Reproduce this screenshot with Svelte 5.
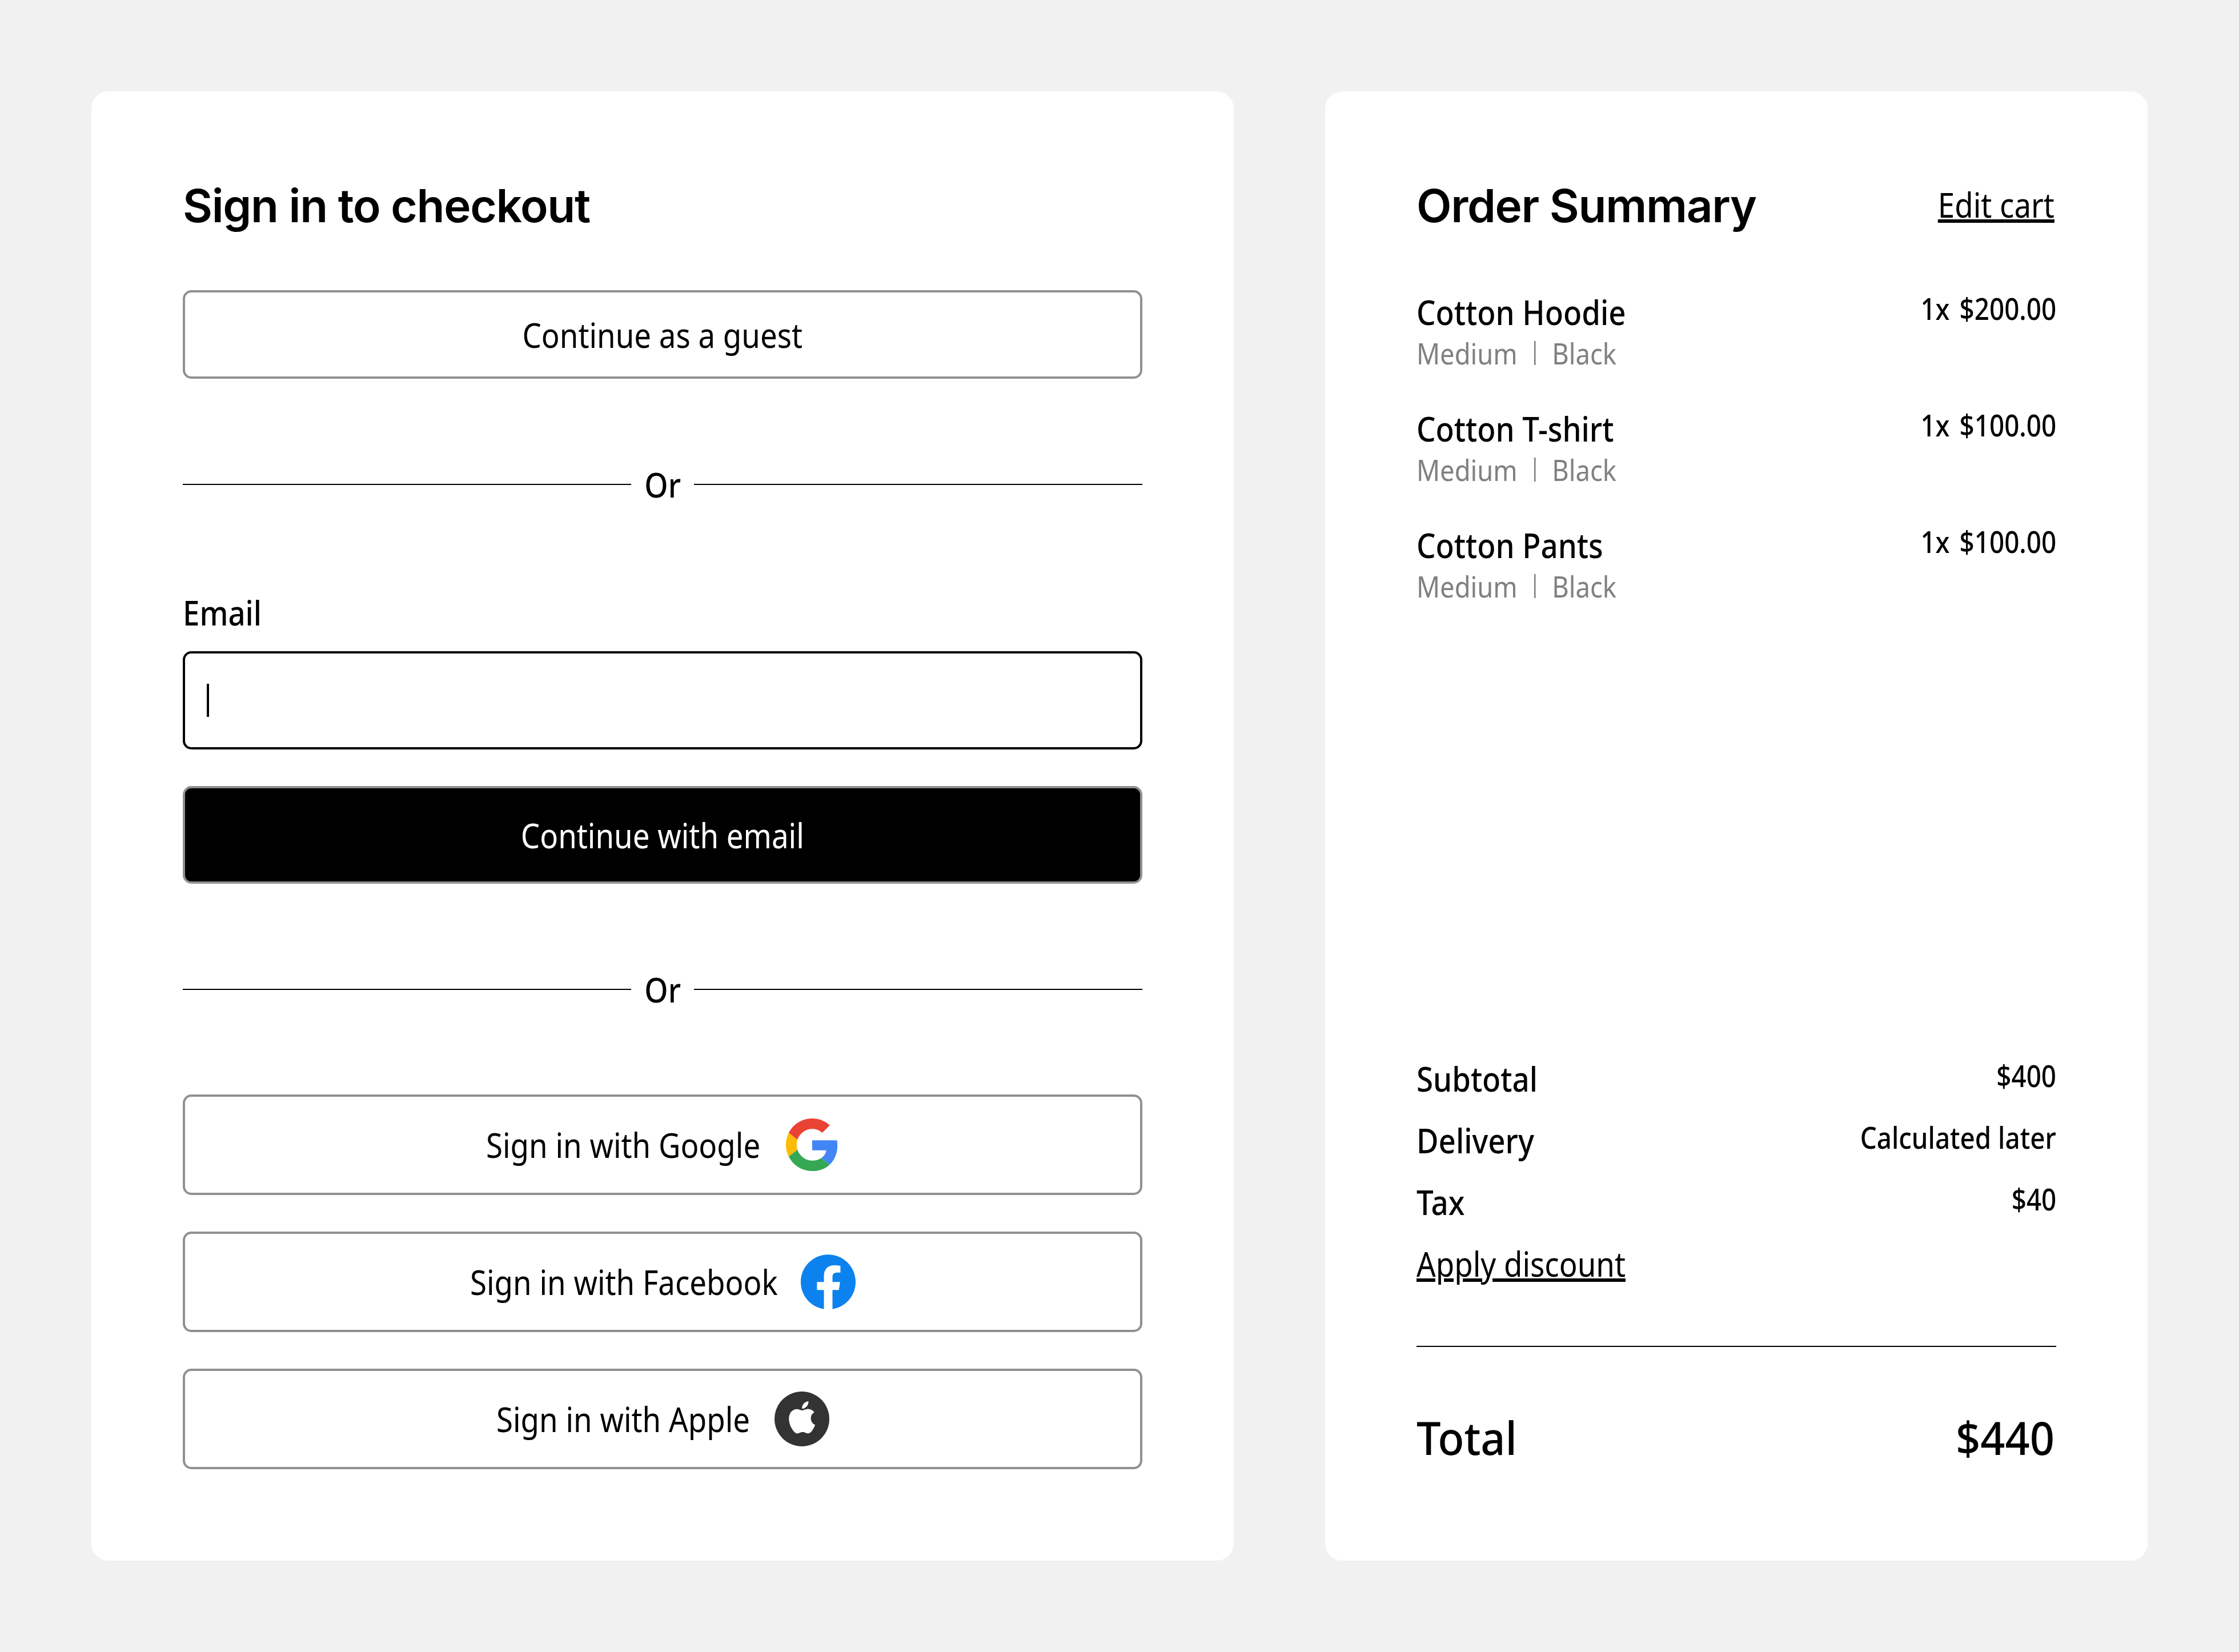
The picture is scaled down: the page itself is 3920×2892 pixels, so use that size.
<script lang="ts">
	const items = [
		{ name: 'Cotton Hoodie', price: '$200.00' },
		{ name: 'Cotton T-shirt', price: '$100.00' },
		{ name: 'Cotton Pants', price: '$100.00' }
	];

	const charges = [
		{ label: 'Subtotal', value: '$400' },
		{ label: 'Delivery', value: 'Calculated later' },
		{ label: 'Tax', value: '$40' }
	];
</script>

<main class="page">
	<section class="card signin">
		<h1>Sign in to checkout</h1>

		<button class="btn guest"><span class="narrow">Continue as a guest</span></button>

		<div class="divider"><span class="narrow">Or</span></div>

		<label class="email-label" for="email"><span class="narrow left">Email</span></label>
		<div class="input" id="email"><span class="caret"></span></div>
		<button class="btn primary"><span class="narrow">Continue with email</span></button>

		<div class="divider"><span class="narrow">Or</span></div>

		<div class="socials">
			<button class="btn social">
				<span class="narrow left label" style="width: 479px">Sign in with Google</span>
				<svg class="icon" viewBox="-1 -1 50 50">
					<path fill="#EA4335" d="M24 9.5c3.54 0 6.71 1.22 9.21 3.6l6.85-6.85C35.9 2.38 30.47 0 24 0 14.62 0 6.51 5.38 2.56 13.22l7.98 6.19C12.43 13.72 17.74 9.5 24 9.5z" />
					<path fill="#4285F4" d="M46.98 24.55c0-1.57-.15-3.09-.38-4.55H24v9.02h12.94c-.58 2.96-2.26 5.48-4.78 7.18l7.73 6c4.51-4.18 7.09-10.36 7.09-17.65z" />
					<path fill="#FBBC05" d="M10.53 28.59c-.48-1.45-.76-2.99-.76-4.59s.27-3.14.76-4.59l-7.98-6.19C.92 16.46 0 20.12 0 24c0 3.88.92 7.54 2.56 10.78l7.97-6.19z" />
					<path fill="#34A853" d="M24 48c6.48 0 11.93-2.13 15.89-5.81l-7.73-6c-2.15 1.45-4.92 2.3-8.16 2.3-6.26 0-11.57-4.22-13.47-9.91l-7.98 6.19C6.51 42.62 14.62 48 24 48z" />
				</svg>
			</button>
			<button class="btn social">
				<span class="narrow left label" style="width: 535px">Sign in with Facebook</span>
				<svg class="icon" viewBox="0 0 24 24">
					<path fill="#0c82ee" d="M24 12.073c0-6.627-5.373-12-12-12s-12 5.373-12 12c0 5.99 4.388 10.954 10.125 11.854v-8.385H7.078v-3.47h3.047V9.43c0-3.007 1.792-4.669 4.533-4.669 1.312 0 2.686.235 2.686.235v2.953H15.83c-1.491 0-1.956.925-1.956 1.874v2.25h3.328l-.532 3.47h-2.796v8.385C19.612 23.027 24 18.062 24 12.073z" />
				</svg>
			</button>
			<button class="btn social">
				<span class="narrow left label" style="width: 443px">Sign in with Apple</span>
				<svg class="icon" viewBox="0 0 96 96">
					<circle cx="48" cy="48" r="48" fill="#333" />
					<g transform="translate(20 17) scale(2.35)">
						<path fill="#fff" d="M12.152 6.896c-.948 0-2.415-1.078-3.96-1.04-2.04.027-3.91 1.183-4.961 3.014-2.117 3.675-.546 9.103 1.519 12.09 1.013 1.454 2.208 3.09 3.792 3.039 1.52-.065 2.09-.987 3.935-.987 1.831 0 2.35.987 3.96.948 1.637-.026 2.676-1.48 3.676-2.948 1.156-1.688 1.636-3.325 1.662-3.415-.039-.013-3.182-1.221-3.22-4.857-.026-3.04 2.48-4.494 2.597-4.559-1.429-2.09-3.623-2.324-4.39-2.376-2-.156-3.675 1.09-4.61 1.09zM15.53 3.83c.843-1.012 1.4-2.427 1.245-3.83-1.207.052-2.662.805-3.532 1.818-.78.896-1.454 2.338-1.273 3.714 1.338.104 2.715-.688 3.559-1.701" />
					</g>
				</svg>
			</button>
		</div>
	</section>

	<section class="card summary">
		<header class="summary-head">
			<h2>Order Summary</h2>
			<a href="#cart" class="link edit narrow right">Edit cart</a>
		</header>

		<ul class="items">
			{#each items as item}
				<li class="item">
					<div>
						<div class="item-name narrow left">{item.name}</div>
						<div class="item-meta narrow left">Medium<span class="sep"></span>Black</div>
					</div>
					<div class="item-price narrow right">1x {item.price}</div>
				</li>
			{/each}
		</ul>

		<div class="totals">
			{#each charges as row}
				<div class="charge">
					<span class="narrow left">{row.label}</span>
					<span class="charge-value narrow right">{row.value}</span>
				</div>
			{/each}
			<a href="#discount" class="link discount narrow left">Apply discount</a>
			<div class="total">
				<span class="narrow left total-text">Total</span>
				<span class="narrow right total-text total-value">$440</span>
			</div>
		</div>
	</section>
</main>

<style>
	:global(body) {
		margin: 0;
		background: #f1f1f1;
		color: #000;
		font-family: 'Noto Sans', sans-serif;
	}

	.page {
		display: flex;
		align-items: stretch;
		gap: 160px;
		box-sizing: border-box;
		width: 3920px;
		height: 2892px;
		padding: 160px;
	}

	.card {
		display: flex;
		flex-direction: column;
		box-sizing: border-box;
		padding: 160px;
		background: #fff;
		border-radius: 30px;
	}

	.signin {
		width: 2000px;
	}

	.summary {
		width: 1440px;
	}

	/* the installed Noto Sans has no semi-condensed cut */
	.narrow {
		display: inline-block;
		width: fit-content;
		white-space: nowrap;
		transform: scaleX(0.88);
	}

	.left {
		transform-origin: left center;
	}

	.right {
		transform-origin: right center;
	}

	h1,
	h2 {
		margin: 0;
		font-family: 'Inter', sans-serif;
		font-size: 80px;
		font-weight: 600;
		line-height: 80px;
		letter-spacing: -1.3px;
	}

	h1 {
		margin-bottom: 108px;
	}

	.btn {
		display: flex;
		align-items: center;
		justify-content: center;
		box-sizing: border-box;
		width: 100%;
		padding: 0;
		background: #fff;
		border: 4px solid #909090;
		border-radius: 15px;
		color: #000;
		font-family: inherit;
		font-size: 60px;
		line-height: 80px;
	}

	.guest {
		height: 155px;
	}

	.primary {
		height: 171px;
		margin-top: 64px;
		background: #000;
		color: #fff;
	}

	.divider {
		display: flex;
		align-items: center;
		gap: 19px;
		margin: 145px 0 144px;
		font-size: 60px;
		font-weight: 500;
		line-height: 80px;
	}

	.divider::before,
	.divider::after {
		content: '';
		flex: 1;
		height: 2px;
		background: #000;
	}

	.email-label {
		margin-bottom: 28px;
		font-size: 60px;
		font-weight: 500;
		line-height: 80px;
	}

	.input {
		display: flex;
		align-items: center;
		box-sizing: border-box;
		height: 172px;
		padding-left: 38px;
		border: 4px solid #000;
		border-radius: 15px;
	}

	.caret {
		width: 4px;
		height: 58px;
		background: #000;
	}

	.socials {
		display: flex;
		flex-direction: column;
		gap: 64px;
	}

	.social {
		gap: 44px;
		height: 176px;
	}

	.label {
		text-align: left;
	}

	.icon {
		flex: none;
		width: 96px;
		height: 96px;
	}

	.summary-head {
		display: flex;
		align-items: center;
		justify-content: space-between;
		height: 80px;
	}

	.link {
		color: #000;
		font-size: 60px;
		text-decoration: underline;
	}

	.edit {
		margin-right: 3px;
		margin-bottom: 4px;
		line-height: 72px;
	}

	.items {
		display: flex;
		flex-direction: column;
		gap: 60px;
		margin: 110px 0 0;
		padding: 0;
		list-style: none;
	}

	.item {
		display: flex;
		justify-content: space-between;
		align-items: flex-start;
	}

	.item-name {
		display: block;
		font-size: 60px;
		font-weight: 500;
		line-height: 72px;
	}

	.item-meta {
		display: flex;
		align-items: center;
		color: #808080;
		font-size: 51.5px;
		line-height: 72px;
	}

	.sep {
		width: 3px;
		height: 42px;
		margin: 0 33px;
		background: #808080;
	}

	.item-price {
		font-size: 52px;
		font-weight: 500;
		line-height: 60px;
		word-spacing: 6px;
	}

	.totals {
		margin-top: auto;
	}

	.charge {
		display: flex;
		justify-content: space-between;
		align-items: flex-start;
		height: 108px;
		font-size: 60px;
		font-weight: 500;
		line-height: 80px;
	}

	.charge-value {
		font-size: 52px;
		line-height: 70px;
	}

	.discount {
		display: block;
		line-height: 80px;
	}

	.total {
		display: flex;
		justify-content: space-between;
		align-items: center;
		margin-top: 104px;
		margin-bottom: 11px;
		padding-top: 113px;
		border-top: 2px solid #000;
		font-size: 80px;
		font-weight: 500;
		line-height: 90px;
	}

	.total-text {
		transform: scaleX(0.945);
	}

	.total-value {
		margin-right: 3px;
	}
</style>
